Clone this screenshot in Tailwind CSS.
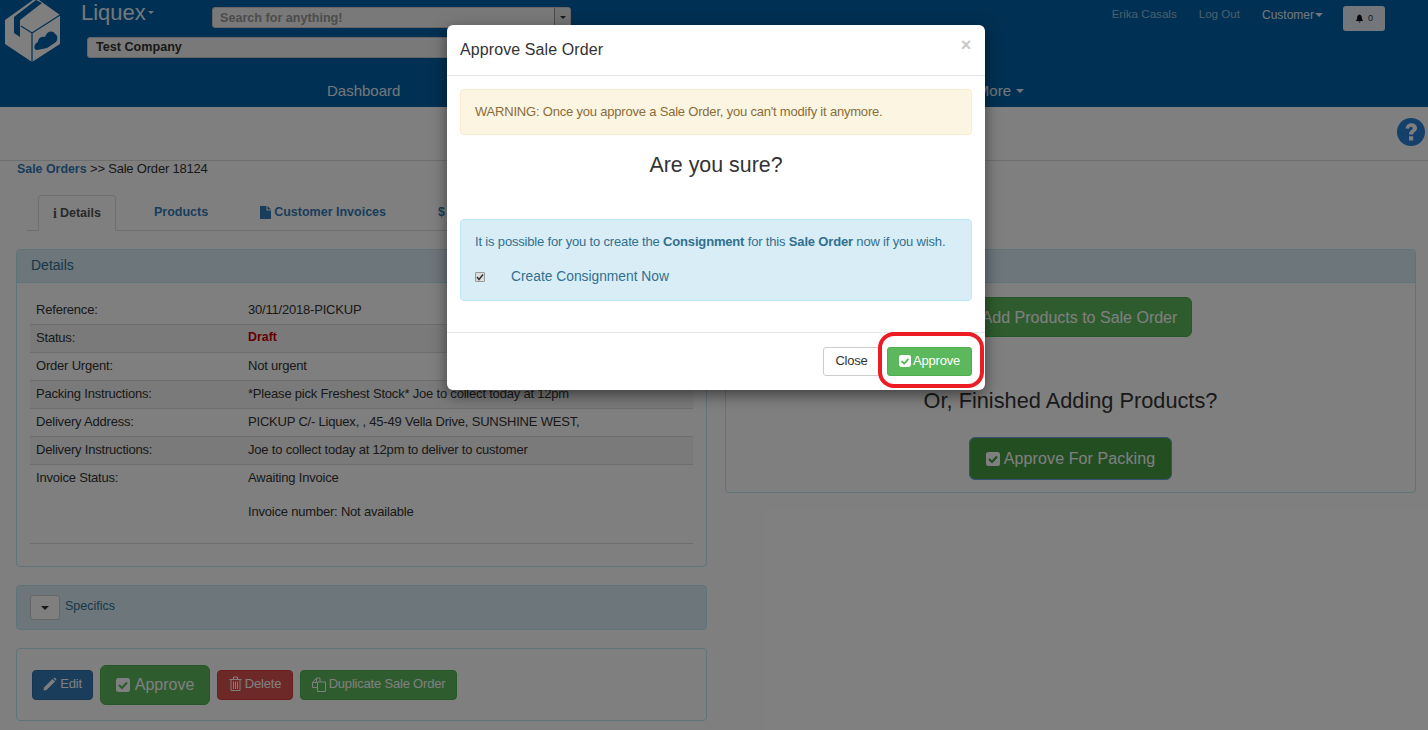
<!DOCTYPE html>
<html lang="en">
<head>
<meta charset="utf-8">
<title>Approve Sale Order</title>
<script src="https://cdn.jsdelivr.net/npm/@tailwindcss/browser@4"></script>
</head>
<body class="bg-white font-['Liberation_Sans',Arial,sans-serif] text-[13px] tracking-[-0.2px] text-[#333] h-[730px] overflow-hidden relative">

<!-- Page under the backdrop -->
<header class="h-[107px] bg-[#0060a6] flex flex-col">
  <div class="flex h-[80px]">
    <div class="w-[81px] shrink-0">
      <svg width="62" height="62" viewBox="0 0 62 62" class="block">
        <path fill="#fff" d="M5 20 L33 0 L39 0 L60 15 L60 44 L32 62 L5 44 Z"/>
        <path fill="#0060a6" d="M36 0 L42 3 L20 20 L20 37 L14 33 L14 17 Z"/>
        <path fill="none" stroke="#0060a6" stroke-width="1.2" d="M32 33 L60 15 M32 33 V62 M32 33 L21 26"/>
        <path fill="#0060a6" d="M37 50 C33 50 34 43 38 42 C38 37 43 36 45 37 C47 31 53 30 55 34 C58 35 58 40 56 42 L47 48 Z"/>
      </svg>
    </div>
    <div class="flex flex-col">
      <div class="flex h-[37px]">
        <div class="w-[131px] text-[22px] tracking-normal leading-[25px] text-white/90 flex items-start">Liquex<span class="mt-[11px] ml-[2px] border-x-[3px] border-t-[3px] border-x-transparent border-t-white/90"></span></div>
        <div class="mt-[7px] w-[359px] h-[21px] bg-[#f2f2f2] border border-[#ccc] rounded-[3px] flex items-center justify-between">
          <span class="pl-[7px] pt-[1px] font-bold text-[12.6px] tracking-normal text-[#999]">Search for anything!</span>
          <span class="w-4 h-full border-l border-[#999] bg-[#e6e6e6] flex items-center justify-center"><span class="border-x-[3px] border-t-[3px] border-x-transparent border-t-[#333]"></span></span>
        </div>
      </div>
      <div class="ml-[6px] w-[480px] h-[21px] bg-[#f2f2f2] border border-[#ccc] rounded-[3px] pl-2 flex items-center font-bold text-[12.6px] tracking-normal text-[#333]">Test Company</div>
    </div>
    <div class="ml-auto flex items-start pt-[6px] pr-[43px] text-[12px] tracking-normal">
      <span class="-mt-[1px] text-[11.6px] text-white/60">Erika Casals</span>
      <span class="ml-[22px] -mt-[1px] text-[11.6px] text-white/60">Log Out</span>
      <span class="ml-[22px] text-white/90 flex items-center">Customer<span class="ml-[1px] border-x-[4px] border-t-[4px] border-x-transparent border-t-white/90"></span></span>
      <span class="ml-[20px] w-[42px] h-[25px] bg-white/90 rounded-[3px] flex items-center justify-center gap-1 text-[9px] text-[#333]">
        <svg width="9" height="9" viewBox="0 0 10 10" fill="#111"><path d="M5 0.5 C3 1 2.4 2.5 2.4 4 C2.4 6 1.6 7 .8 7.8 L9.2 7.8 C8.4 7 7.6 6 7.6 4 C7.6 2.5 7 1 5 .5 Z M3.8 8.4 H6.2 C6 9.8 4 9.8 3.8 8.4 Z"/></svg>0</span>
    </div>
  </div>
  <nav class="flex items-center pl-[327px] pr-[404px] text-[15px] tracking-normal leading-[20px] text-white/90 justify-between mt-[1px]">
    <span>Dashboard</span>
    <span class="flex items-center">More<span class="ml-[5px] border-x-[4px] border-t-[4px] border-x-transparent border-t-white/90"></span></span>
  </nav>
</header>

<div class="h-[54px] border-b border-[#ddd] flex justify-end items-start pt-[11px] pr-[3px]">
  <svg width="28" height="28" viewBox="0 0 28 28"><circle cx="14" cy="14" r="14" fill="#2a80d8"/><path d="M8.6 10.4 C9 6.6 12 5.2 14.4 5.2 C17.8 5.2 20 7.4 20 10 C20 13.6 16.2 13.8 16.2 16.4 L12 16.4 C12 12.4 15.6 12.2 15.6 10.2 C15.6 9.2 14.8 8.8 14 8.8 C13 8.8 12.4 9.6 12 10.8 Z M12 18.2 H16.2 V22.4 H12 Z" fill="#fff"/></svg>
</div>

<div class="pl-[17px] h-[34px] leading-[15px]"><span class="text-[#337ab7] font-bold text-[12.4px] tracking-normal">Sale Orders</span> &gt;&gt; Sale Order 18124</div>

<main class="grid grid-cols-[691px_691px] gap-x-[18px] pl-[16px]">
  <section>
    <div class="mx-[11px] mb-[18px] h-[36px] border-b border-[#ddd] flex items-end font-bold text-[12.5px] tracking-normal text-[#337ab7]">
      <div class="ml-[11px] w-[78px] h-[36px] bg-white border border-[#ddd] border-b-white rounded-t-[4px] text-[#555] flex items-center justify-center gap-[3px] -mb-px"><span class="font-['Liberation_Serif',serif] font-bold text-[14px]">i</span>Details</div>
      <div class="ml-[38px] h-[36px] flex items-center">Products</div>
      <div class="ml-[52px] h-[36px] flex items-center gap-[3px]"><svg width="11" height="13" viewBox="0 0 11 13" fill="#337ab7"><path d="M0 0 H6.5 V4.5 H11 V13 H0 Z M7.5 0 L11 3.5 H7.5 Z"/></svg>Customer Invoices</div>
      <div class="ml-[52px] h-[36px] flex items-center">$ Payments</div>
    </div>

    <div class="h-[318px] border border-[#bce8f1] rounded-[4px] mb-[18px] overflow-hidden">
      <div class="h-[33px] pb-[2px] bg-[#d9edf7] border-b border-[#bce8f1] flex items-center pl-[14px] text-[14px] tracking-normal text-[#31708f]">Details</div>
      <div class="mx-[13px] mt-[14px] border-b border-[#ddd]">
        <div class="grid grid-cols-[212px_1fr] pl-[6px] h-[28px] pb-[2px] items-center border-b border-[#ddd]"><span>Reference:</span><span>30/11/2018-PICKUP</span></div>
        <div class="grid grid-cols-[212px_1fr] pl-[6px] h-[28px] pb-[2px] items-center border-b border-[#ddd] bg-[#f5f5f5]"><span>Status:</span><span class="text-[#c00] font-bold text-[12.4px] tracking-normal">Draft</span></div>
        <div class="grid grid-cols-[212px_1fr] pl-[6px] h-[28px] pb-[2px] items-center border-b border-[#ddd]"><span>Order Urgent:</span><span>Not urgent</span></div>
        <div class="grid grid-cols-[212px_1fr] pl-[6px] h-[28px] pb-[2px] items-center border-b border-[#ddd] bg-[#f5f5f5]"><span>Packing Instructions:</span><span>*Please pick Freshest Stock* Joe to collect today at 12pm</span></div>
        <div class="grid grid-cols-[212px_1fr] pl-[6px] h-[28px] pb-[2px] items-center border-b border-[#ddd]"><span>Delivery Address:</span><span>PICKUP C/- Liquex, , 45-49 Vella Drive, SUNSHINE WEST,</span></div>
        <div class="grid grid-cols-[212px_1fr] pl-[6px] h-[28px] pb-[2px] items-center border-b border-[#ddd] bg-[#f5f5f5]"><span>Delivery Instructions:</span><span>Joe to collect today at 12pm to deliver to customer</span></div>
        <div class="grid grid-cols-[212px_1fr] pl-[6px] h-[78px] pt-[3px] items-start"><span>Invoice Status:</span><div><p>Awaiting Invoice</p><p class="mt-[14px]">Invoice number: Not available</p></div></div>
      </div>
    </div>

    <div class="h-[45px] border border-[#bce8f1] rounded-[4px] bg-[#d9edf7] mb-[18px] flex items-center pl-[13px] gap-[5px] text-[#31708f] text-[12.5px] tracking-normal">
      <span class="w-[30px] h-[25px] bg-white border border-[#ccc] rounded-[3px] flex items-center justify-center"><span class="border-x-[4px] border-t-[4px] border-x-transparent border-t-[#333]"></span></span><span class="-mt-[2px]">Specifics</span>
    </div>

    <div class="h-[73px] border border-[#bce8f1] rounded-[4px] flex items-center pl-[15px] text-white">
      <span class="w-[61px] h-[30px] pb-[2px] bg-[#337ab7] border border-[#2e6da4] rounded-[4px] flex items-center justify-center gap-[3px]">
        <svg width="14" height="14" viewBox="0 0 14 14" fill="#fff"><path d="M1 10.5 L9.5 2 L12 4.5 L3.5 13 L0.5 13.5 Z M10.3 1.2 C11 .5 11.6 .5 12.2 1 L13 1.8 C13.5 2.4 13.5 3 12.8 3.7 Z"/></svg>Edit</span>
      <span class="ml-[7px] w-[110px] h-[40px] bg-[#5cb85c] border border-[#4cae4c] rounded-[6px] flex items-center justify-center gap-[5px] text-[16px] tracking-normal">
        <svg width="14" height="14" viewBox="0 0 14 14"><rect width="14" height="14" rx="2.5" fill="#fff"/><path d="M3 7 L6 10 L11 4.5" fill="none" stroke="#5cb85c" stroke-width="2.2"/></svg>Approve</span>
      <span class="ml-[7px] w-[76px] h-[30px] pb-[2px] bg-[#d9534f] border border-[#d43f3a] rounded-[4px] flex items-center justify-center gap-[3px]">
        <svg width="13" height="15" viewBox="0 0 13 15" fill="none" stroke="#fff"><path d="M.5 3.5 H12.5 M4.5 3.5 V1 H8.5 V3.5 M2 3.5 V14.5 H11 V3.5 M4.5 5.5 V13 M6.5 5.5 V13 M8.5 5.5 V13"/></svg>Delete</span>
      <span class="ml-[7px] w-[157px] h-[30px] pb-[1px] bg-[#5cb85c] border border-[#4cae4c] rounded-[4px] flex items-center justify-center gap-[3px]">
        <svg width="14" height="15" viewBox="0 0 14 15" fill="none" stroke="#fff"><path d="M5.5 5 H13.5 V14.5 H5.5 Z M5.5 10.5 H.5 V5.5 L4.5 1 H8 V5 M4.5 1 V5.5 H.5"/></svg>Duplicate Sale Order</span>
    </div>
  </section>

  <section class="pt-[54px]">
    <div class="h-[244px] border border-[#bce8f1] rounded-[4px] overflow-hidden flex flex-col items-center">
      <div class="w-full h-[33px] bg-[#d9edf7] border-b border-[#bce8f1] shrink-0"></div>
      <span class="mt-[14px] w-[243px] h-[40px] bg-[#5cb85c] border border-[#4cae4c] rounded-[6px] flex items-center justify-center gap-[4px] pt-[1px] text-[16px] tracking-normal text-white">
        <svg width="14" height="14" viewBox="0 0 14 14" fill="#fff"><path d="M5.5 0 H8.5 V5.5 H14 V8.5 H8.5 V14 H5.5 V8.5 H0 V5.5 H5.5 Z"/></svg>Add Products to Sale Order</span>
      <p class="mt-[51px] text-[21.75px] tracking-normal leading-[26px]">Or, Finished Adding Products?</p>
      <span class="mt-[23px] w-[203px] h-[43px] bg-[#449d44] border border-[#6a9fe0] rounded-[6px] flex items-center justify-center gap-[4px] text-[16px] tracking-[0.1px] text-white">
        <svg width="14" height="14" viewBox="0 0 14 14"><rect width="14" height="14" rx="2.5" fill="#fff"/><path d="M3 7 L6 10 L11 4.5" fill="none" stroke="#449d44" stroke-width="2.2"/></svg>Approve For Packing</span>
    </div>
  </section>
</main>

<!-- Backdrop -->
<div class="absolute inset-0 bg-black/50"></div>

<!-- Modal -->
<div class="absolute left-[447px] top-[25px] w-[538px] h-[365px] bg-white rounded-[6px] shadow-[0_5px_15px_rgba(0,0,0,0.5)] flex flex-col">
  <div class="h-[51px] border-b border-[#e5e5e5] flex items-center justify-between pl-[13px] pr-[14px] shrink-0">
    <h2 class="text-[16px] tracking-[0.1px] text-[#333]">Approve Sale Order</h2>
    <span class="text-[18px] font-bold text-[#c9c9c9] mt-[-11px] leading-none">×</span>
  </div>
  <div class="px-[13px] pt-[13px]">
    <div class="h-[46px] bg-[#fcf5e1] border border-[#faebcc] rounded-[4px] flex items-center pl-[14px] text-[#8a6d3b]">WARNING: Once you approve a Sale Order, you can't modify it anymore.</div>
    <p class="mt-[17px] h-[26px] text-center text-[21.4px] tracking-normal leading-[26px] text-[#333]">Are you sure?</p>
    <div class="mt-[41px] h-[82px] bg-[#d9edf7] border border-[#bce8f1] rounded-[4px] pl-[14px] pt-[14px] tracking-[-0.17px] text-[#31708f]">
      <p class="leading-[15px]">It is possible for you to create the <b>Consignment</b> for this <b>Sale Order</b> now if you wish.</p>
      <div class="mt-[20px] flex items-center h-[16px]">
        <span class="w-[10px] h-[10px] bg-[#ddd] border border-[#999] rounded-[1px] flex items-center justify-center"><svg width="8" height="8" viewBox="0 0 8 8"><path d="M1 4 L3 6.5 L7 1.5" fill="none" stroke="#333" stroke-width="1.5"/></svg></span>
        <span class="ml-[26px] text-[13.8px] tracking-normal">Create Consignment Now</span>
      </div>
    </div>
  </div>
  <div class="mt-auto h-[58px] border-t border-[#e5e5e5] flex items-start justify-end pt-[14px] pr-[13px]">
    <span class="w-[57px] h-[29px] pb-[1px] bg-white border border-[#ccc] rounded-[3px] flex items-center justify-center text-[#333]">Close</span>
    <span class="ml-[7px] w-[85px] h-[29px] pb-[1px] bg-[#5cb85c] border border-[#4cae4c] rounded-[3px] flex items-center justify-center gap-[2px] text-white">
      <svg width="12" height="12" viewBox="0 0 14 14"><rect width="14" height="14" rx="2.5" fill="#fff"/><path d="M3 7 L6 10 L11 4.5" fill="none" stroke="#5cb85c" stroke-width="2.2"/></svg>Approve</span>
  </div>
</div>

<!-- Red annotation -->
<div class="absolute left-[878px] top-[332px] w-[106px] h-[56px] border-[4px] border-[#ed1c24] rounded-[16px]"></div>

</body>
</html>
